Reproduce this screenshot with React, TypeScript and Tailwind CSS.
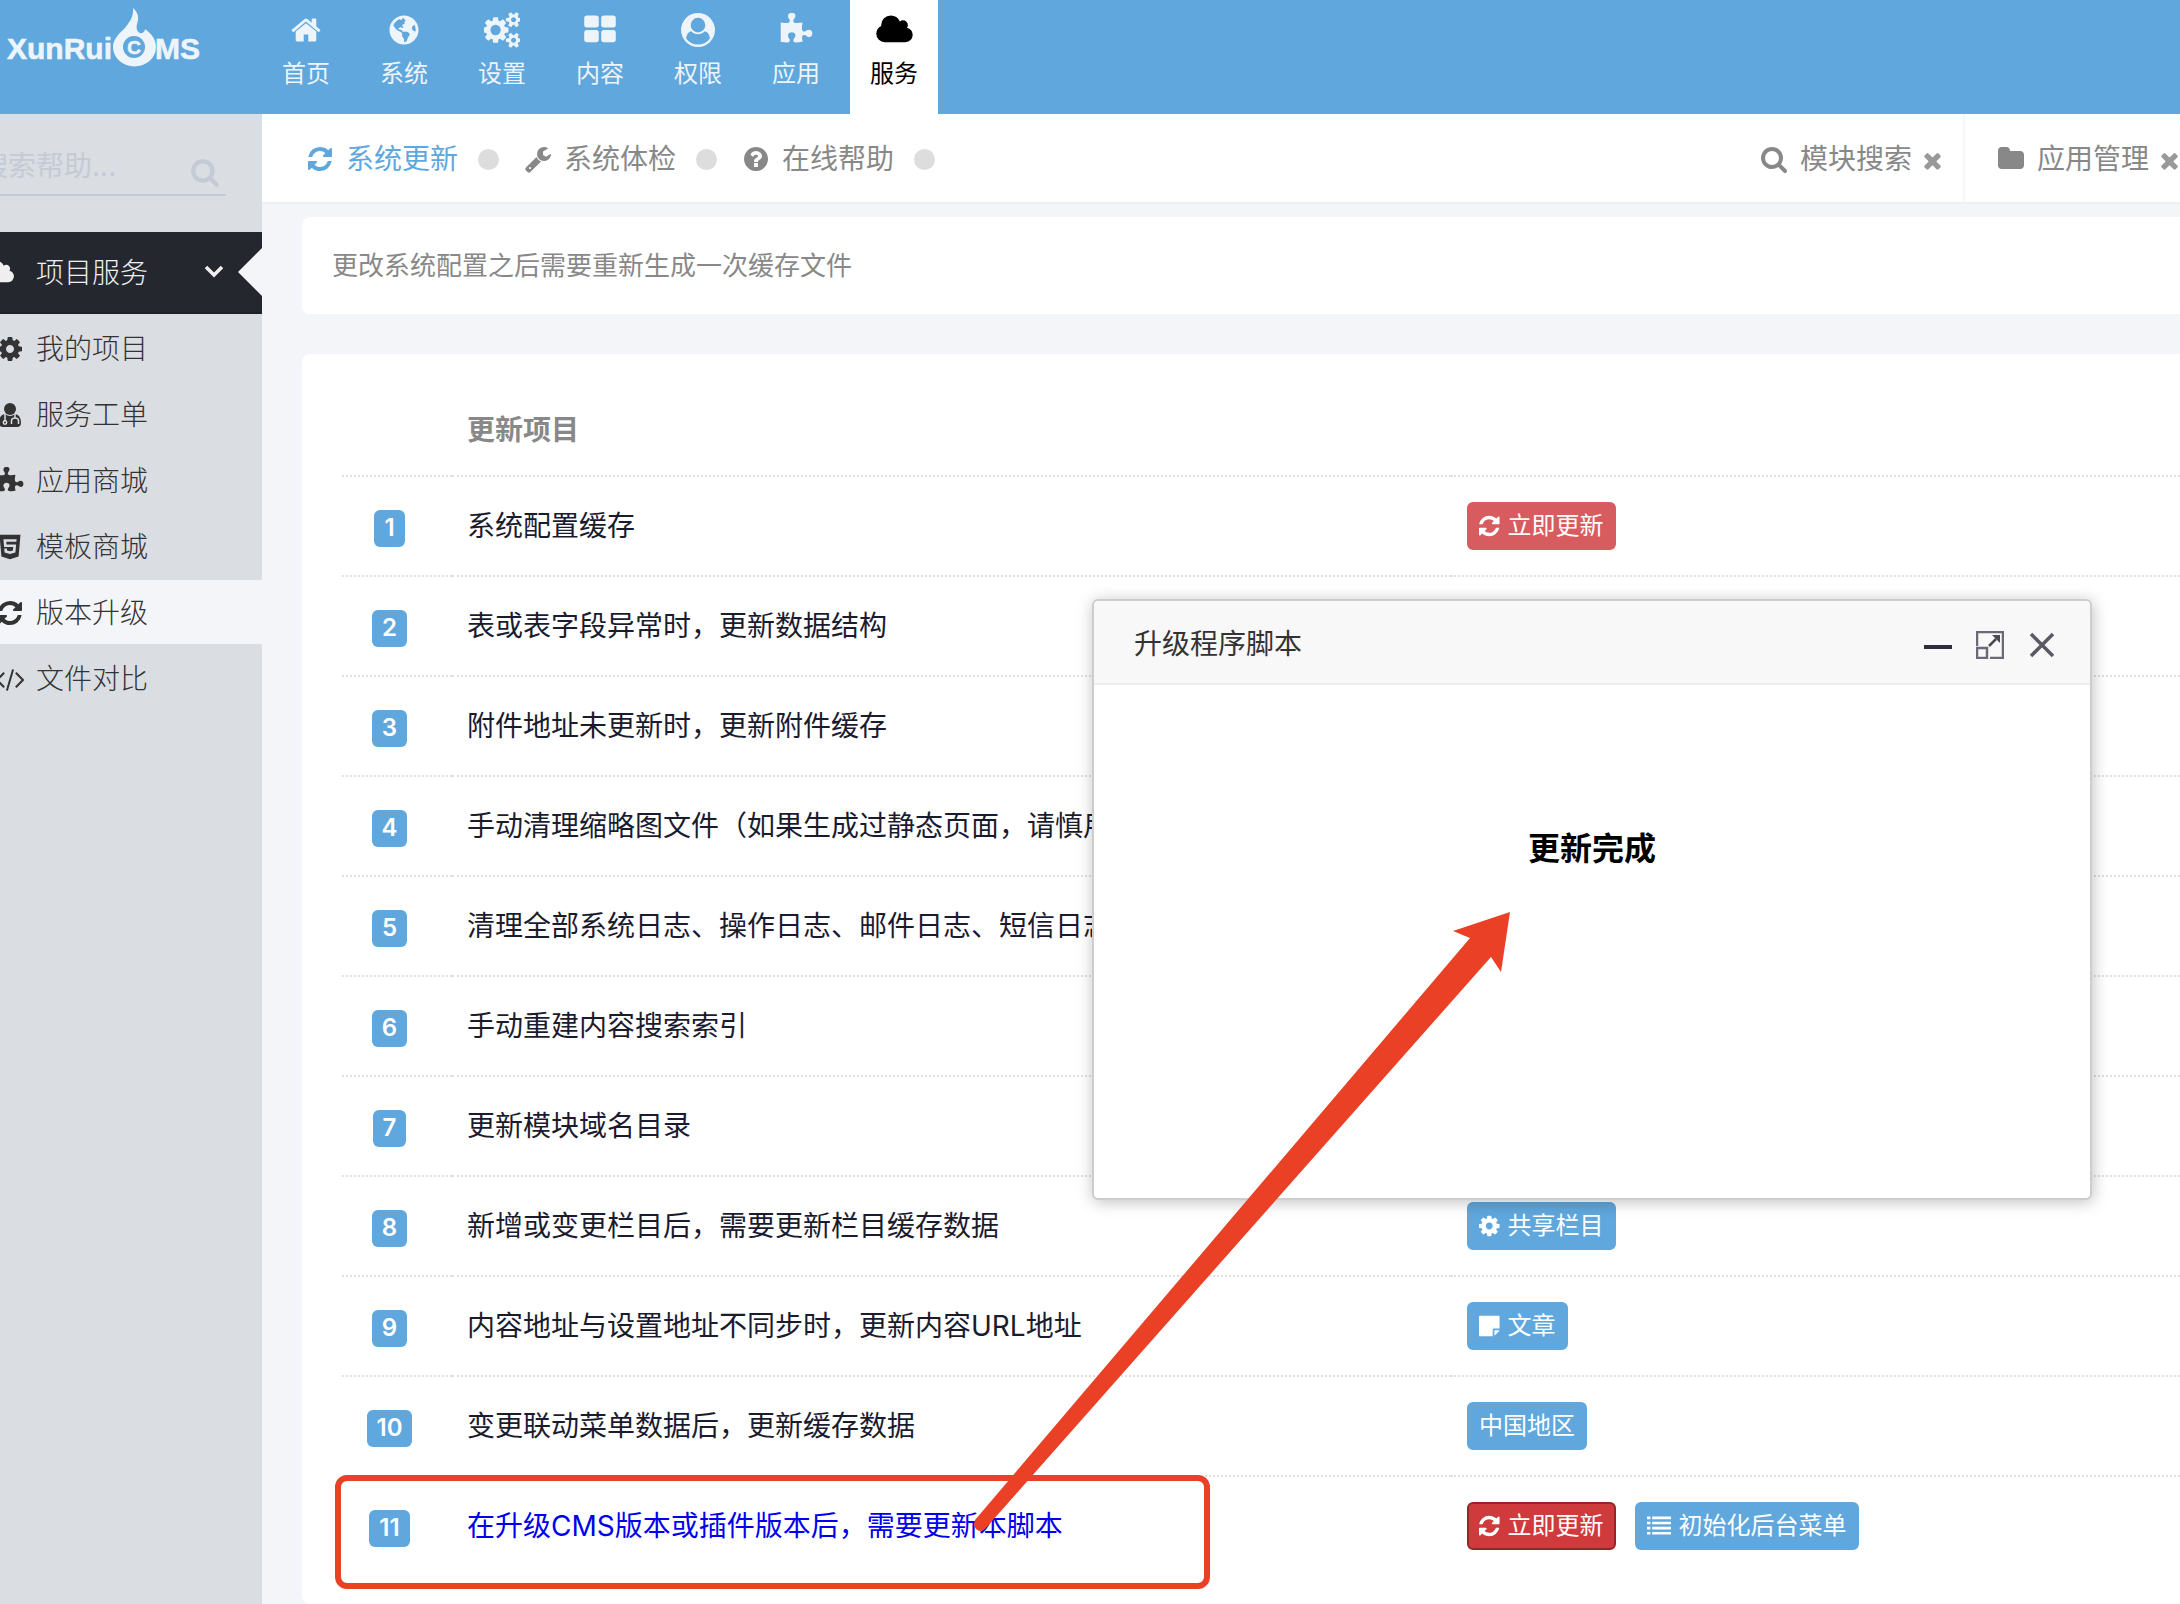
import { FaGlobeAmericas, FaHtml5 } from "react-icons/fa";

const glyphs = {
  home: "M1472 992v480q0 26-19 45t-45 19h-384v-384h-256v384h-384q-26 0-45-19t-19-45v-480q0-1 .5-3t.5-3l575-474 575 474q1 2 1 6zm223-69l-62 74q-8 9-21 11h-3q-13 0-21-7l-692-577-692 577q-12 8-24 7-13-2-21-11l-62-74q-8-10-7-23.5t11-21.5l719-599q32-26 76-26t76 26l244 204v-195q0-14 9-23t23-9h192q14 0 23 9t9 23v408l219 182q10 8 11 21.5t-7 23.5z",
  cogs: "M832 896q0-106-75-181t-181-75-181 75-75 181 75 181 181 75 181-75 75-181zm768 512q0-52-38-90t-90-38-90 38-38 90q0 53 37.5 90.5t90.5 37.5 90.5-37.5 37.5-90.5zm0-1024q0-52-38-90t-90-38-90 38-38 90q0 53 37.5 90.5t90.5 37.5 90.5-37.5 37.5-90.5zm-384 421v185q0 10-7 19.5t-16 10.5l-155 24q-11 35-32 76 34 48 90 115 7 11 7 20 0 12-7 19-23 30-82.5 89.5t-78.5 59.5q-11 0-21-7l-115-90q-37 19-77 31-11 108-23 155-7 24-30 24h-186q-11 0-20-7.5t-10-17.5l-23-153q-34-10-75-31l-118 89q-7 7-20 7-11 0-21-8-144-133-144-160 0-9 7-19 10-14 41-53t47-61q-23-44-35-82l-152-24q-10-1-17-9.5t-7-19.5v-185q0-10 7-19.5t16-10.5l155-24q11-35 32-76-34-48-90-115-7-11-7-20 0-12 7-20 22-30 82-89t79-59q11 0 21 7l115 90q34-18 77-32 11-108 23-154 7-24 30-24h186q11 0 20 7.5t10 17.5l23 153q34 10 75 31l118-89q8-7 20-7 11 0 21 8 144 133 144 160 0 8-7 19-12 16-42 54t-45 60q23 48 34 82l152 23q10 2 17 10.5t7 19.5zm640 533v140q0 16-149 31-12 27-30 52 51 113 51 138 0 4-4 7-122 71-124 71-8 0-46-47t-52-68q-20 2-30 2t-30-2q-14 21-52 68t-46 47q-2 0-124-71-4-3-4-7 0-25 51-138-18-25-30-52-149-15-149-31v-140q0-16 149-31 13-29 30-52-51-113-51-138 0-4 4-7 4-2 35-20t59-34 30-16q8 0 46 46.5t52 67.5q20-2 30-2t30 2q51-71 92-112l6-2q4 0 124 70 4 3 4 7 0 25-51 138 17 23 30 52 149 15 149 31zm0-1024v140q0 16-149 31-12 27-30 52 51 113 51 138 0 4-4 7-122 71-124 71-8 0-46-47t-52-68q-20 2-30 2t-30-2q-14 21-52 68t-46 47q-2 0-124-71-4-3-4-7 0-25 51-138-18-25-30-52-149-15-149-31v-140q0-16 149-31 13-29 30-52-51-113-51-138 0-4 4-7 4-2 35-20t59-34 30-16q8 0 46 46.5t52 67.5q20-2 30-2t30 2q51-71 92-112l6-2q4 0 124 70 4 3 4 7 0 25-51 138 17 23 30 52 149 15 149 31z",
  thLarge: "M832 1024v384q0 52-38 90t-90 38h-512q-52 0-90-38t-38-90v-384q0-52 38-90t90-38h512q52 0 90 38t38 90zm0-768v384q0 52-38 90t-90 38h-512q-52 0-90-38t-38-90v-384q0-52 38-90t90-38h512q52 0 90 38t38 90zm896 768v384q0 52-38 90t-90 38h-512q-52 0-90-38t-38-90v-384q0-52 38-90t90-38h512q52 0 90 38t38 90zm0-768v384q0 52-38 90t-90 38h-512q-52 0-90-38t-38-90v-384q0-52 38-90t90-38h512q52 0 90 38t38 90z",
  userCircle: "M1523 1339q-22-155-87.5-257.5t-184.5-118.5q-67 74-159.5 115.5t-195.5 41.5-195.5-41.5-159.5-115.5q-119 16-184.5 118.5t-87.5 257.5q106 150 271 237.5t356 87.5 356-87.5 271-237.5zm-243-699q0-159-112.5-271.5t-271.5-112.5-271.5 112.5-112.5 271.5 112.5 271.5 271.5 112.5 271.5-112.5 112.5-271.5zm512 256q0 182-71 347.5t-190.5 286-285.5 191.5-349 71q-182 0-348-71t-286-191-191-286-71-348 71-348 191-286 286-191 348-71 348 71 286 191 191 286 71 348z",
  puzzle: "M1755 1083q0 81-44.5 135t-123.5 54q-41 0-77.5-17.5t-59-38-56.5-38-71-17.5q-110 0-110 124 0 39 16 115t15 115v5q-22 0-33 1-34 3-97.5 11.5t-115.5 13.5-98 5q-61 0-103-26.5t-42-83.5q0-37 17.5-71t38-56.5 38-59 17.5-77.5q0-79-54-123.5t-135-44.5q-84 0-143 45.5t-59 127.5q0 43 15 83t33.5 64.5 33.5 53 15 50.5q0 45-46 89-37 35-117 35-95 0-245-24-9-2-27.5-4t-27.5-4l-13-2q-1 0-3-1-2 0-2-1v-1024q2 1 17.5 3.5t34 5 21.5 3.5q150 24 245 24 80 0 117-35 46-44 46-89 0-22-15-50.5t-33.5-53-33.5-64.5-15-83q0-82 59-127.5t144-45.5q80 0 134 44.5t54 123.5q0 41-17.5 77.5t-38 59-38 56.5-17.5 71q0 57 42 83.5t103 26.5q64 0 180-15t163-17v2q-1 2-3.5 17.5t-5 34-3.5 21.5q-24 150-24 245 0 80 35 117 44 46 89 46 22 0 50.5-15t53-33.5 64.5-33.5 83-15q82 0 127.5 59t45.5 143z",
  cloud: "M1984 1152q0 159-112.5 271.5t-271.5 112.5h-1088q-185 0-316.5-131.5t-131.5-316.5q0-132 71-241.5t187-163.5q-2-28-2-43 0-212 150-362t362-150q158 0 286.5 88t187.5 230q70-62 166-62 106 0 181 75t75 181q0 75-41 138 129 30 213 134.5t84 239.5z",
  refresh: "M1639 1056q0 5-1 7-64 268-268 434.5t-478 166.5q-146 0-282.5-55t-243.5-157l-129 129q-19 19-45 19t-45-19-19-45v-448q0-26 19-45t45-19h448q26 0 45 19t19 45-19 45l-137 137q71 66 161 102t187 36q134 0 250-65t186-179q11-17 53-117 8-23 30-23h192q13 0 22.5 9.5t9.5 22.5zm25-800v448q0 26-19 45t-45 19h-448q-26 0-45-19t-19-45 19-45l138-138q-148-137-349-137-134 0-250 65t-186 179q-11 17-53 117-8 23-30 23h-199q-13 0-22.5-9.5t-9.5-22.5v-7q65-268 270-434.5t480-166.5q146 0 284 55.5t245 156.5l130-129q19-19 45-19t45 19 19 45z",
  wrench: "M448 1472q0-26-19-45t-45-19-45 19-19 45 19 45 45 19 45-19 19-45zm644-420l-682 682q-37 37-90 37-52 0-91-37l-106-108q-38-36-38-90 0-53 38-91l681-681q39 98 114.5 173.5t173.5 114.5zm634-435q0 39-23 106-47 134-164.5 217.5t-258.5 83.5q-185 0-316.5-131.5t-131.5-316.5 131.5-316.5 316.5-131.5q58 0 121.5 16.5t107.5 46.5q16 11 16 28t-16 28l-293 169v224l193 107q5-3 79-48.5t135.5-81 70.5-35.5q15 0 23.5 10t8.5 25z",
  question: "M1024 1376v-192q0-14-9-23t-23-9h-192q-14 0-23 9t-9 23v192q0 14 9 23t23 9h192q14 0 23-9t9-23zm256-672q0-88-55.5-163t-138.5-116-170-41q-243 0-371 213-15 24 8 42l132 100q7 6 19 6 16 0 25-12 53-68 86-92 34-24 86-24 48 0 85.5 26t37.5 59q0 38-20 61t-68 45q-63 28-115.5 86.5t-52.5 125.5v36q0 14 9 23t23 9h192q14 0 23-9t9-23q0-19 21.5-49.5t54.5-49.5q32-18 49-28.5t46-35 44.5-48 28-60.5 12.5-81zm384 192q0 209-103 385.5t-279.5 279.5-385.5 103-385.5-103-279.5-279.5-103-385.5 103-385.5 279.5-279.5 385.5-103 385.5 103 279.5 279.5 103 385.5z",
  search: "M1216 832q0-185-131.5-316.5t-316.5-131.5-316.5 131.5-131.5 316.5 131.5 316.5 316.5 131.5 316.5-131.5 131.5-316.5zm512 832q0 52-38 90t-90 38q-54 0-90-38l-343-342q-179 124-399 124-143 0-273.5-55.5t-225-150-150-225-55.5-273.5 55.5-273.5 150-225 225-150 273.5-55.5 273.5 55.5 225 150 150 225 55.5 273.5q0 220-124 399l343 343q37 37 37 90z",
  times: "M1490 1322q0 40-28 68l-136 136q-28 28-68 28t-68-28l-294-294-294 294q-28 28-68 28t-68-28l-136-136q-28-28-28-68t28-68l294-294-294-294q-28-28-28-68t28-68l136-136q28-28 68-28t68 28l294 294 294-294q28-28 68-28t68 28l136 136q28 28 28 68t-28 68l-294 294 294 294q28 28 28 68z",
  folder: "M1728 608v704q0 92-66 158t-158 66h-1216q-92 0-158-66t-66-158v-960q0-92 66-158t158-66h320q92 0 158 66t66 158v32h672q92 0 158 66t66 158z",
  cog: "M1152 896q0-106-75-181t-181-75-181 75-75 181 75 181 181 75 181-75 75-181zm512-109v222q0 12-8 23t-20 13l-185 28q-19 54-39 91 35 50 107 138 10 12 10 25t-9 23q-27 37-99 108t-94 71q-12 0-26-9l-138-108q-44 23-91 38-16 136-29 186-7 28-36 28h-222q-14 0-24.5-8.5t-11.5-21.5l-28-184q-49-16-90-37l-141 107q-10 9-25 9-14 0-25-11-126-114-165-168-7-10-7-23 0-12 8-23 15-21 51-66.5t54-70.5q-27-50-41-99l-183-27q-13-2-21-12.5t-8-23.5v-222q0-12 8-23t19-13l186-28q14-46 39-92-40-57-107-138-10-12-10-24 0-10 9-23 26-36 98.5-107.5t94.5-71.5q13 0 26 10l138 107q44-23 91-38 16-136 29-186 7-28 36-28h222q14 0 24.5 8.5t11.5 21.5l28 184q49 16 90 37l142-107q9-9 24-9 13 0 25 10 129 119 165 170 7 8 7 22 0 12-8 23-15 21-51 66.5t-54 70.5q26 50 41 98l183 28q13 2 21 12.5t8 23.5z",
  code: "M681 1399l-50 50q-10 10-23 10t-23-10l-466-466q-10-10-10-23t10-23l466-466q10-10 23-10t23 10l50 50q10 10 10 23t-10 23l-393 393 393 393q10 10 10 23t-10 23zm591-1067l-373 1291q-4 13-15.5 19.5t-23.5 2.5l-62-17q-13-4-19.5-15.5t-2.5-24.5l373-1291q4-13 15.5-19.5t23.5-2.5l62 17q13 4 19.5 15.5t2.5 24.5zm657 651l-466 466q-10 10-23 10t-23-10l-50-50q-10-10-10-23t10-23l393-393-393-393q-10-10-10-23t10-23l50-50q10-10 23-10t23 10l466 466q10 10 10 23t-10 23z",
  note: "M192 128h1408q64 0 64 64v896h-416q-96 0-96 96v480h-960q-64 0-64-64v-1408q0-64 64-64zM1280 1216h380q-6 40-40 80l-260 260q-40 38-80 46z",
  list: "M0 192h256v192h-256zM384 192h1408v192h-1408zM0 576h256v192h-256zM384 576h1408v192h-1408zM0 960h256v192h-256zM384 960h1408v192h-1408zM0 1344h256v192h-256zM384 1344h1408v192h-1408z",
};

type GlyphName = keyof typeof glyphs;

const viewBoxes: Partial<Record<GlyphName, string>> = {
  cloud: "0 0 2048 1792",
  code: "0 0 2048 1792",
  refresh: "128 0 1536 1792",
  cog: "128 0 1536 1792",
  note: "128 0 1536 1792",
};

function Glyph({ name, className }: { name: GlyphName; className: string }) {
  return (
    <svg
      viewBox={viewBoxes[name] || "0 0 1792 1792"}
      className={`shrink-0 ${className}`}
      fill="currentColor"
      aria-hidden="true"
    >
      <path d={glyphs[name]} />
    </svg>
  );
}

function DoctorIcon() {
  return (
    <svg viewBox="0 0 24 24" className="size-6" fill="currentColor" aria-hidden="true">
      <circle cx="12" cy="6" r="6" />
      <path d="M7 11q5 4 10 0c5 1 6 5 6 9q0 4-4 4H5q-4 0-4-4c0-4 1-8 6-9z" />
      <g fill="none" stroke="#dadde2" strokeWidth="1.5">
        <path d="M7 11v7M17 11v4M13.500 21v-3q0-3 3.500-3t3.500 3v3" />
        <circle cx="7" cy="19.500" r="1.700" />
      </g>
    </svg>
  );
}

function Logo() {
  return (
    <svg
      viewBox="0 0 210 72"
      className="h-[72px] w-[210px] font-['Liberation_Sans',Arial,sans-serif] font-bold"
      fill="#edf4fa"
      role="img"
      aria-label="XunRuiCMS"
    >
      <g stroke="#edf4fa" strokeWidth="0.6">
        <text x="7" y="59" fontSize="30">
          XunRui
        </text>
        <text x="155" y="59" fontSize="30">
          MS
        </text>
      </g>
      <path d="M133 8c1 9-4 15-9 21-7 6-11 12-11 18a21 19 0 0 0 43 0c0-7-4-13-11-18 0 2-2 5-5 4-3-1-4-5-3-9 2-5 2-11-4-16z" />
      <circle cx="134" cy="47" r="11" fill="#5fa7dd" />
      <text x="134" y="54" fontSize="19" textAnchor="middle" stroke="#edf4fa" strokeWidth="0.6">
        C
      </text>
    </svg>
  );
}

const navItems = [
  { label: "首页", icon: <Glyph name="home" className="size-8" /> },
  { label: "系统", icon: <FaGlobeAmericas className="size-[30px]" /> },
  { label: "设置", icon: <Glyph name="cogs" className="size-[36px]" /> },
  { label: "内容", icon: <Glyph name="thLarge" className="size-[34px]" /> },
  { label: "权限", icon: <Glyph name="userCircle" className="size-[34px]" /> },
  { label: "应用", icon: <Glyph name="puzzle" className="size-[34px]" /> },
  { label: "服务", icon: <Glyph name="cloud" className="h-[34px] w-[39px]" />, active: true },
];

function Header() {
  return (
    <header className="flex h-[114px] bg-[#5fa7dd]">
      <a href="#" className="w-[262px] shrink-0">
        <Logo />
      </a>
      <nav className="flex gap-[10px]">
        {navItems.map((item) => (
          <a
            key={item.label}
            href="#"
            className={`flex w-[88px] flex-col items-center pt-[10px] text-[24px] leading-[36px] ${
              item.active ? "bg-white text-black" : "text-[#edf4fa]"
            }`}
          >
            <span className="flex h-10 items-center">{item.icon}</span>
            <span className="mt-[6px]">{item.label}</span>
          </a>
        ))}
      </nav>
    </header>
  );
}

const menuItems = [
  { label: "我的项目", icon: <Glyph name="cog" className="size-7" /> },
  { label: "服务工单", icon: <DoctorIcon /> },
  { label: "应用商城", icon: <Glyph name="puzzle" className="size-7" /> },
  { label: "模板商城", icon: <FaHtml5 className="size-7" /> },
  { label: "版本升级", icon: <Glyph name="refresh" className="size-7" />, active: true },
  { label: "文件对比", icon: <Glyph name="code" className="h-7 w-8" /> },
];

function Sidebar() {
  return (
    <aside className="w-[262px] shrink-0 overflow-hidden bg-[#dadde2] text-[28px] font-light">
      <form className="-ml-5 mr-9 mt-5 flex h-[62px] items-center border-b-2 border-[#c4cbd5]">
        <input
          type="text"
          aria-label="搜索帮助"
          placeholder="搜索帮助..."
          className="w-full min-w-0 bg-transparent pt-1 font-normal outline-none placeholder:text-[#c4cbd5]"
        />
        <button type="button" aria-label="搜索" className="mr-[6px] mt-4 text-[#c4cbd5]">
          <Glyph name="search" className="size-[30px]" />
        </button>
      </form>

      <a href="#" className="mt-9 flex h-[82px] items-center border-b-2 border-[#1d2026] bg-[#24272e] text-[#efefef]">
        <Glyph name="cloud" className="-ml-4 h-[27px] w-[31px]" />
        <span className="ml-[21px] flex-1 pt-[2px]">项目服务</span>
        <svg viewBox="0 0 20 14" className="h-[14px] w-5" fill="none" stroke="currentColor" strokeWidth="3.500">
          <path d="M2 2l8 8 8-8" />
        </svg>
        <svg viewBox="0 0 24 48" className="ml-[14px] h-12 w-6" fill="#f4f5f8">
          <path d="M24 0v48L0 24z" />
        </svg>
      </a>

      <ul className="flex flex-col gap-[2px] pt-[2px] text-[#333333]">
        {menuItems.map((item) => (
          <li key={item.label} className={item.active ? "bg-[#f4f5f8]" : ""}>
            <a href="#" className="flex h-16 items-center pt-[2px]">
              <span className="-ml-2 mr-2 flex w-9 shrink-0 justify-center">{item.icon}</span>
              {item.label}
            </a>
          </li>
        ))}
      </ul>
    </aside>
  );
}

const tabs: { label: string; icon: GlyphName; active?: boolean }[] = [
  { label: "系统更新", icon: "refresh", active: true },
  { label: "系统体检", icon: "wrench" },
  { label: "在线帮助", icon: "question" },
];

const shortcuts: { label: string; icon: GlyphName }[] = [
  { label: "模块搜索", icon: "search" },
  { label: "应用管理", icon: "folder" },
];

function TabBar() {
  return (
    <div className="flex h-[90px] shrink-0 items-stretch justify-between overflow-hidden border-b-2 border-[#eef0f3] bg-white text-[28px] text-[#888888]">
      <ul className="flex items-center pl-11">
        {tabs.map((tab) => (
          <li key={tab.label} className="flex w-[218px] items-center">
            <a href="#" className={`flex items-center gap-3 pt-[2px] ${tab.active ? "text-[#5fa7dd]" : ""}`}>
              <Glyph name={tab.icon} className="size-[28px]" />
              {tab.label}
            </a>
            <span className="ml-5 mt-[2px] size-[21px] rounded-full bg-[#dddddd]" />
          </li>
        ))}
      </ul>
      <ul className="flex">
        {shortcuts.map((item, i) => (
          <li
            key={item.label}
            className={`flex items-center ${i === 0 ? "border-r-2 border-[#f7f7f9] pr-[18px]" : "-mr-[2px] pl-8"}`}
          >
            <a href="#" className="flex items-center gap-3 pt-[2px]">
              <Glyph name={item.icon} className="size-[28px]" />
              {item.label}
            </a>
            <button type="button" aria-label="关闭" className="ml-2 mt-1 text-[#999999]">
              <Glyph name="times" className="size-[25px]" />
            </button>
          </li>
        ))}
      </ul>
    </div>
  );
}

type Action = { label: string; icon?: GlyphName; tone?: "red" | "pressed" };

const rows: { text: string; actions: Action[]; link?: boolean }[] = [
  { text: "系统配置缓存", actions: [{ label: "立即更新", icon: "refresh", tone: "red" }] },
  { text: "表或表字段异常时，更新数据结构", actions: [] },
  { text: "附件地址未更新时，更新附件缓存", actions: [] },
  { text: "手动清理缩略图文件（如果生成过静态页面，请慎用）", actions: [] },
  { text: "清理全部系统日志、操作日志、邮件日志、短信日志", actions: [] },
  { text: "手动重建内容搜索索引", actions: [] },
  { text: "更新模块域名目录", actions: [] },
  { text: "新增或变更栏目后，需要更新栏目缓存数据", actions: [{ label: "共享栏目", icon: "cog" }] },
  { text: "内容地址与设置地址不同步时，更新内容URL地址", actions: [{ label: "文章", icon: "note" }] },
  { text: "变更联动菜单数据后，更新缓存数据", actions: [{ label: "中国地区" }] },
  {
    text: "在升级CMS版本或插件版本后，需要更新本脚本",
    link: true,
    actions: [
      { label: "立即更新", icon: "refresh", tone: "pressed" },
      { label: "初始化后台菜单", icon: "list" },
    ],
  },
];

function ActionButton({ action }: { action: Action }) {
  let tone = "border-[#5fa7dd] bg-[#5fa7dd]";
  if (action.tone === "red") tone = "border-[#d75c60] bg-[#d75c60]";
  if (action.tone === "pressed") tone = "border-[#94262a] bg-[#cf3a3c]";
  return (
    <button
      type="button"
      className={`flex h-12 items-center gap-2 rounded-md border-2 px-[10px] text-[24px] leading-none text-white ${tone}`}
    >
      {action.icon && <Glyph name={action.icon} className="h-6 w-auto" />}
      {action.label}
    </button>
  );
}

function UpdateTable() {
  return (
    <table className="w-full table-fixed border-separate border-spacing-0 text-[28px] text-[#1b1b2f]">
      <thead>
        <tr className="h-[81px] text-left text-[#888888]">
          <th className="w-[110px]"></th>
          <th className="w-[999px] pb-[10px] pl-[15px] font-bold">更新项目</th>
          <th></th>
        </tr>
      </thead>
      <tbody>
        {rows.map((row, i) => (
          <tr key={row.text} className="h-[100px] *:border-t-2 *:border-dotted *:border-[#dfdfe4]">
            <td className="pr-[15px] text-center">
              <span className="inline-flex h-[37px] items-center rounded-md bg-[#5fa7dd] px-[10px] align-middle text-[24px] font-semibold text-white">
                {i + 1}
              </span>
            </td>
            <td className="overflow-hidden whitespace-nowrap pl-[15px]">
              {row.link ? (
                <a href="#" className="text-[#0000ee]">
                  {row.text}
                </a>
              ) : (
                row.text
              )}
            </td>
            <td className="pl-4">
              <div className="flex gap-[19px]">
                {row.actions.map((action) => (
                  <ActionButton key={action.label} action={action} />
                ))}
              </div>
            </td>
          </tr>
        ))}
      </tbody>
    </table>
  );
}

function Dialog() {
  return (
    <div
      role="dialog"
      aria-label="升级程序脚本"
      className="absolute left-[1092px] top-[599px] h-[601px] w-[1000px] rounded-md border-2 border-[#cdcdcd] bg-white shadow-[1px_2px_16px_rgba(0,0,0,0.25)]"
    >
      <div className="flex h-[84px] items-center rounded-t-md border-b-2 border-[#ececec] bg-[#f8f8f8] pl-10 pr-[34px] pt-1 text-[28px] text-[#333333]">
        <h2 className="flex-1">升级程序脚本</h2>
        <div className="flex items-center gap-6 pt-[2px] text-[#2e2d3c]">
          <button type="button" aria-label="最小化">
            <svg viewBox="0 0 28 28" className="size-7" fill="currentColor">
              <path d="M0 14h28v4H0z" />
            </svg>
          </button>
          <button type="button" aria-label="最大化">
            <svg viewBox="0 0 28 28" className="size-7" fill="none" stroke="#6a6975" strokeWidth="2.500">
              <path d="M1 15V1h26v26H14M1 17h10v10H1z" />
              <path d="M13 15l7-7" stroke="#4a4954" />
              <path d="M16 4h8v8z" fill="#4a4954" stroke="none" />
            </svg>
          </button>
          <button type="button" aria-label="关闭">
            <svg viewBox="0 0 28 28" className="size-7" fill="none" stroke="#5a5964" strokeWidth="3.500">
              <path d="M3 3l22 22M25 3L3 25" />
            </svg>
          </button>
        </div>
      </div>
      <p className="pt-[140px] text-center text-[32px] font-bold leading-[48px] text-black">更新完成</p>
    </div>
  );
}

// red box around the last row and the arrow that leads from it into the dialog
function Callout() {
  return (
    <>
      <div className="pointer-events-none absolute left-[335px] top-[1475px] h-[114px] w-[875px] rounded-xl border-[6px] border-[#ea4126]" />
      <svg
        viewBox="0 0 540 624"
        className="pointer-events-none absolute left-[972px] top-[909px] h-[624px] w-[540px]"
        fill="#ea4126"
        aria-hidden="true"
      >
        <path d="M538 3L529 63L519 48L13 620Q8 624 4 620Q1 616 3 611L498 29L481 22z" />
      </svg>
    </>
  );
}

export default function App() {
  return (
    <div className="relative flex min-h-screen flex-col overflow-hidden bg-[#f4f5f8] font-['Inter','Noto_Sans_CJK_SC',sans-serif]">
      <Header />
      <div className="flex flex-1">
        <Sidebar />
        <main className="flex min-w-0 flex-1 flex-col">
          <TabBar />
          <div className="flex flex-1 flex-col gap-10 pl-10 pt-[13px]">
            <p className="rounded-l-lg bg-white px-[30px] py-7 text-[26px] leading-[41px] text-[#888888]">
              更改系统配置之后需要重新生成一次缓存文件
            </p>
            <section className="flex-1 rounded-l-lg bg-white pl-10 pt-10">
              <UpdateTable />
            </section>
          </div>
        </main>
      </div>
      <Dialog />
      <Callout />
    </div>
  );
}
